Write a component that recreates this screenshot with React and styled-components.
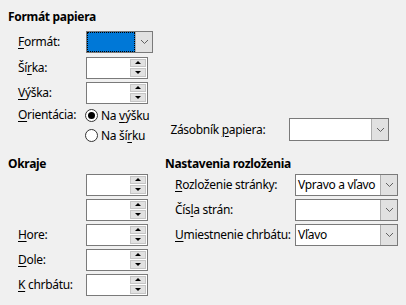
import React from "react";
import styled, { createGlobalStyle } from "styled-components";

const Global = createGlobalStyle`
  html, body {
    margin: 0;
    background: #f0f0f0;
  }
  body {
    font-family: "Noto Sans", "Open Sans", sans-serif;
    font-size: 12px;
    letter-spacing: -0.3px;
    color: #000;
  }
`;

const Page = styled.div`
  width: 406px;
  height: 305px;
  padding: 8px 0 0 8px;
  box-sizing: border-box;
`;

const Heading = styled.div`
  font-weight: bold;
  height: 17px;
  line-height: 17px;
`;

const Section = styled.div`
  display: flex;
  flex-direction: column;
`;

const Row = styled.div`
  display: flex;
  align-items: ${(p) => (p.$top ? "flex-start" : "center")};
  height: ${(p) => p.$h || 25}px;
  margin-top: ${(p) => p.$mt || 0}px;
`;

const Label = styled.span`
  width: ${(p) => p.$w || 68}px;
  padding-left: 10px;
  flex-shrink: 0;
  white-space: nowrap;
  line-height: ${(p) => (p.$tall ? 20 : 14)}px;
`;

const U = styled.span`
  text-decoration: underline;
  text-underline-offset: 2px;
`;

const SpinBox = styled.div`
  width: 62px;
  height: 22px;
  box-sizing: border-box;
  border: 1px solid #7a7a7a;
  background: #fff;
  display: flex;
  justify-content: flex-end;
  padding: 1px;
`;

const SpinButtons = styled.div`
  width: 16px;
  display: flex;
  flex-direction: column;
  gap: 1px;
`;

const SpinButton = styled.div`
  flex: 1;
  background: #e1e1e1;
  border: 1px solid #c5c5c5;
  display: flex;
  align-items: center;
  justify-content: center;
`;

const Arrow = styled.div`
  width: 0;
  height: 0;
  border-left: 3px solid transparent;
  border-right: 3px solid transparent;
  ${(p) =>
    p.$up
      ? "border-bottom: 3px solid #000;"
      : "border-top: 3px solid #000;"}
`;

const Combo = styled.div`
  width: ${(p) => p.$w}px;
  height: ${(p) => p.$h || 22}px;
  box-sizing: border-box;
  border: 1px solid #7a7a7a;
  background: #fff;
  display: flex;
`;

const ComboValue = styled.div`
  flex: 1;
  padding-left: 2px;
  line-height: 20px;
  white-space: nowrap;
  overflow: hidden;
  ${(p) =>
    p.$focus &&
    `background: #0078d7; outline: 1px dotted #000; outline-offset: -1px;`}
`;

const ComboButton = styled.div`
  width: 16px;
  background: #e1e1e1;
  border-left: 1px solid #adadad;
  display: flex;
  align-items: center;
  justify-content: center;
`;

const RadioGroup = styled.div`
  display: flex;
  flex-direction: column;
`;

const RadioRow = styled.label`
  display: flex;
  align-items: center;
  height: 20px;
  gap: 3px;
  margin-left: -1px;
`;

const RadioCircle = styled.span`
  width: 13px;
  height: 13px;
  box-sizing: border-box;
  border-radius: 50%;
  border: 1px solid #333;
  background: #fff;
  display: flex;
  align-items: center;
  justify-content: center;
  &::after {
    content: "";
    width: 7px;
    height: 7px;
    border-radius: 50%;
    background: ${(p) => (p.$checked ? "#000" : "transparent")};
  }
`;

const Tray = styled.div`
  display: flex;
  align-items: center;
  align-self: flex-end;
  margin: 0 0 4px 21px;
`;

const TrayLabel = styled.span`
  width: 119px;
`;

const Columns = styled.div`
  display: flex;
  margin-top: 10px;
`;

const LeftCol = styled(Section)`
  width: 157px;
`;

const RightCol = styled(Section)`
  flex: 1;
`;

const Spacer = styled.span`
  width: 78px;
  flex-shrink: 0;
`;

function Chevron() {
  return (
    <svg width="9" height="6" viewBox="0 0 9 6">
      <path d="M1 1 L4.5 4.5 L8 1" fill="none" stroke="#606060" strokeWidth="1" />
    </svg>
  );
}

function Spin() {
  return (
    <SpinBox>
      <SpinButtons>
        <SpinButton>
          <Arrow $up />
        </SpinButton>
        <SpinButton>
          <Arrow />
        </SpinButton>
      </SpinButtons>
    </SpinBox>
  );
}

function Select({ width, value, focus, height }) {
  return (
    <Combo $w={width} $h={height}>
      <ComboValue $focus={focus}>{value}</ComboValue>
      <ComboButton>
        <Chevron />
      </ComboButton>
    </Combo>
  );
}

export default function App() {
  return (
    <Page>
      <Global />
      <Section>
        <Heading>Formát papiera</Heading>
        <Row $mt={4} $h={26}>
          <Label>
            <U>F</U>ormát:
          </Label>
          <Select width={67} focus />
        </Row>
        <Row>
          <Label>
            Ší<U>r</U>ka:
          </Label>
          <Spin />
        </Row>
        <Row>
          <Label>
            <U>V</U>ýška:
          </Label>
          <Spin />
        </Row>
        <Row $h={40} $top>
          <Label $tall>
            <U>O</U>rientácia:
          </Label>
          <RadioGroup>
            <RadioRow>
              <RadioCircle $checked />
              <span>
                Na <U>v</U>ýšku
              </span>
            </RadioRow>
            <RadioRow>
              <RadioCircle />
              <span>
                Na ší<U>r</U>ku
              </span>
            </RadioRow>
          </RadioGroup>
          <Tray>
            <TrayLabel>
              Zásobník <U>p</U>apiera:
            </TrayLabel>
            <Select width={100} height={23} />
          </Tray>
        </Row>
      </Section>
      <Columns>
        <LeftCol>
          <Heading>Okraje</Heading>
          <Row>
            <Spacer />
            <Spin />
          </Row>
          <Row>
            <Spacer />
            <Spin />
          </Row>
          <Row>
            <Label>
              <U>H</U>ore:
            </Label>
            <Spin />
          </Row>
          <Row>
            <Label>
              <U>D</U>ole:
            </Label>
            <Spin />
          </Row>
          <Row>
            <Label>
              <U>K</U> chrbátu:
            </Label>
            <Spin />
          </Row>
        </LeftCol>
        <RightCol>
          <Heading>Nastavenia rozloženia</Heading>
          <Row>
            <Label $w={120}>
              <U>R</U>ozloženie stránky:
            </Label>
            <Select width={103} value="Vpravo a vľavo" />
          </Row>
          <Row>
            <Label $w={120}>
              Čís<U>l</U>a strán:
            </Label>
            <Select width={103} />
          </Row>
          <Row>
            <Label $w={120}>
              <U>U</U>miestnenie chrbátu:
            </Label>
            <Select width={103} value="Vľavo" />
          </Row>
        </RightCol>
      </Columns>
    </Page>
  );
}
